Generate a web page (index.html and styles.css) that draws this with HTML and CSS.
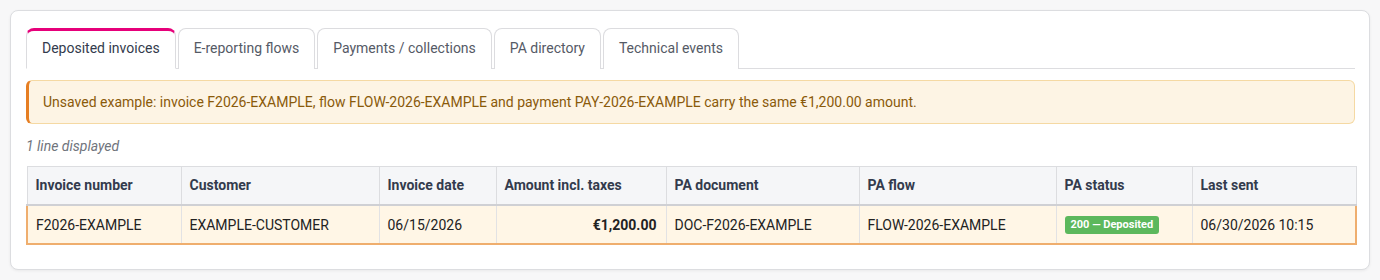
FILE: index.html
```html
<!DOCTYPE html>
<html lang="en">
<head>
<meta charset="utf-8">
<title>Deposited invoices</title>
<link rel="stylesheet" href="styles.css">
</head>
<body>
<div class="panel">
  <ul class="tabs">
    <li class="tab active">Deposited invoices</li>
    <li class="tab">E-reporting flows</li>
    <li class="tab">Payments / collections</li>
    <li class="tab">PA directory</li>
    <li class="tab">Technical events</li>
  </ul>
  <div class="alert">Unsaved example: invoice F2026-EXAMPLE, flow FLOW-2026-EXAMPLE and payment PAY-2026-EXAMPLE carry the same €1,200.00 amount.</div>
  <p class="count">1 line displayed</p>
  <table class="grid">
    <colgroup>
      <col class="c1"><col class="c2"><col class="c3"><col class="c4"><col class="c5"><col class="c6"><col class="c7"><col class="c8">
    </colgroup>
    <thead>
      <tr>
        <th>Invoice number</th>
        <th>Customer</th>
        <th>Invoice date</th>
        <th>Amount incl. taxes</th>
        <th>PA document</th>
        <th>PA flow</th>
        <th>PA status</th>
        <th>Last sent</th>
      </tr>
    </thead>
    <tbody>
      <tr class="hl">
        <td>F2026-EXAMPLE</td>
        <td>EXAMPLE-CUSTOMER</td>
        <td>06/15/2026</td>
        <td class="num">€1,200.00</td>
        <td>DOC-F2026-EXAMPLE</td>
        <td>FLOW-2026-EXAMPLE</td>
        <td><span class="badge">200 — Deposited</span></td>
        <td>06/30/2026 10:15</td>
      </tr>
    </tbody>
  </table>
</div>
</body>
</html>
```

FILE: styles.css
```css
html, body {
  margin: 0;
  padding: 0;
  background: #f7f7f8;
}
body {
  padding: 10px;
  font-family: Roboto, "Liberation Sans", sans-serif;
  font-size: 14px;
  color: #333;
}
.panel {
  box-sizing: border-box;
  width: 1360px;
  height: 260px;
  background: #fff;
  border: 1px solid #dcdde0;
  border-radius: 8px;
  box-shadow: 0 1px 3px rgba(0,0,0,0.06);
  padding: 17px 14px 24px 15px;
}
.tabs {
  list-style: none;
  margin: 0;
  padding: 0;
  display: flex;
  gap: 2px;
  border-bottom: 1px solid #dddde0;
  height: 40px;
}
.tab {
  box-sizing: border-box;
  height: 41px;
  padding: 10px 15px 0 15px;
  border: 1px solid #dcdcdf;
  border-bottom: none;
  border-radius: 8px 8px 0 0;
  color: #555a66;
  background: #fff;
  line-height: 18px;
  margin-bottom: -1px;
}
.tab.active {
  border-top: 3px solid #e6007a;
  padding-top: 8px;
  color: #333b4d;
  border-bottom: 1px solid #fff;
}
.alert {
  margin-top: 11px;
  background: #fdf4e4;
  border: 1px solid #f5d9a3;
  border-left: 3px solid #e67e22;
  border-radius: 6px;
  padding: 12px 14px;
  line-height: 18px;
  color: #8a5a0a;
}
.count {
  margin: 14px 0 12px 0;
  font-size: 14px;
  font-style: italic;
  color: #70747c;
  line-height: 16px;
}
.grid {
  width: 100%;
  border-collapse: collapse;
  table-layout: fixed;
}
.c1 { width: 154px; }
.c2 { width: 198px; }
.c3 { width: 117px; }
.c4 { width: 170px; }
.c5 { width: 193px; }
.c6 { width: 197px; }
.c7 { width: 136px; }
.c8 { width: 164px; }
.grid th {
  background: #f5f6f8;
  border: 1px solid #dcdde0;
  border-bottom: 2px solid #cfd0d4;
  text-align: left;
  font-weight: 700;
  color: #333b4d;
  padding: 9px 8px 10px 8px;
  height: 18px;
  line-height: 18px;
}
.grid td {
  border: 1px solid #e2e2e4;
  padding: 9px 8px;
  line-height: 18px;
  color: #222;
  white-space: nowrap;
}
.grid tr.hl td {
  background: #fff6e6;
  border-top: 2px solid #efae6e;
  border-bottom: 2px solid #efae6e;
}
.grid tr.hl td:first-child {
  border-left: 2px solid #efae6e;
}
.grid tr.hl td:last-child {
  border-right: 2px solid #efae6e;
}
.grid td.num {
  text-align: right;
  font-weight: 700;
  padding-right: 9px;
}
.badge {
  display: inline-block;
  background: #5cb85c;
  color: #fff;
  font-size: 11px;
  font-weight: 700;
  line-height: 14px;
  padding: 2px 6px;
  border-radius: 3px;
  vertical-align: middle;
}
```
